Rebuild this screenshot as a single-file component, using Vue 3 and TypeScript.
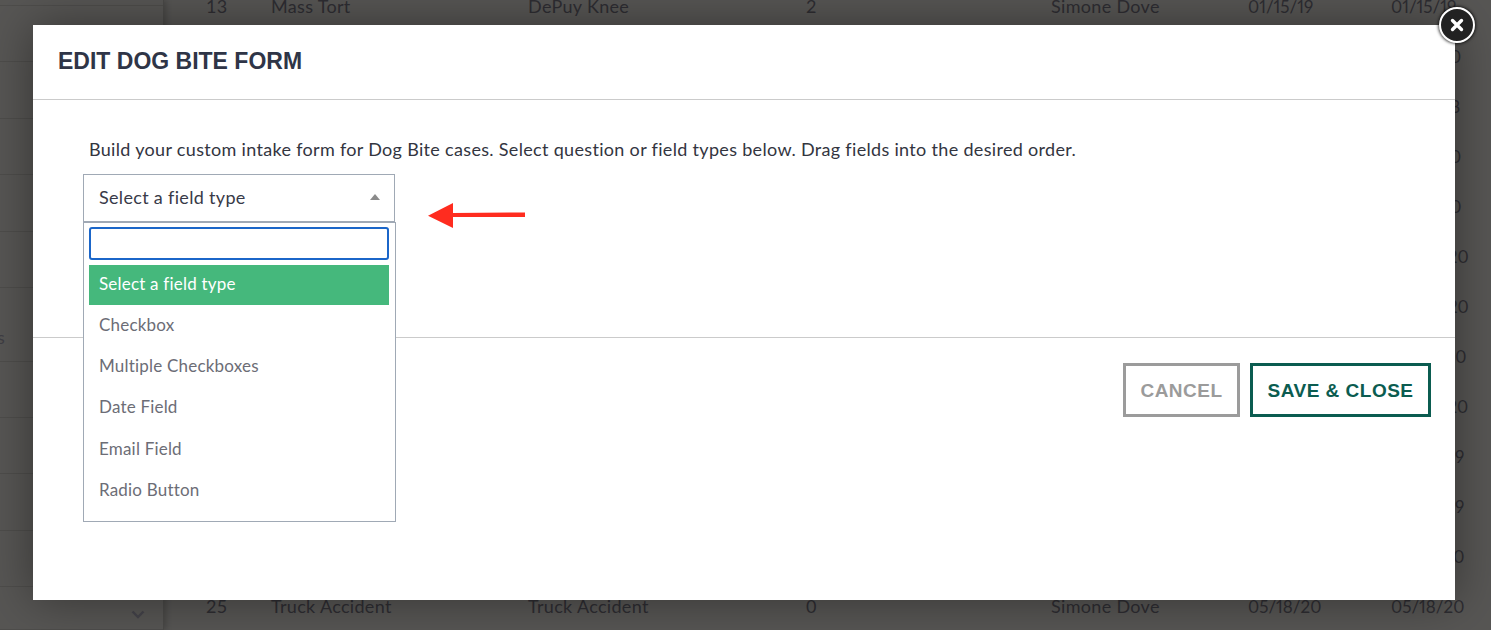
<script setup lang="ts">
interface CaseRow {
  id: number;
  type: string;
  name: string;
  count: number;
  owner: string;
  created: string;
  updated: string;
}

const dates = ['01/15/19', '01/15/20', '05/18/18', '01/15/20', '02/11/20', '03/05/20', '03/20/20', '04/01/20', '04/09/20', '08/02/19', '08/02/19', '05/18/20', '05/18/20'];

const rows: CaseRow[] = dates.map((d, i) => ({
  id: 13 + i,
  type: i === 12 ? 'Truck Accident' : 'Mass Tort',
  name: i === 12 ? 'Truck Accident' : 'DePuy Knee',
  count: i === 12 ? 0 : 2,
  owner: 'Simone Dove',
  created: d,
  updated: d,
}));

const sideHeights = [6, 56, 57, 56, 57, 56, 74, 56, 56, 57, 56, 43];
const options = ['Checkbox', 'Multiple Checkboxes', 'Date Field', 'Email Field', 'Radio Button'];
</script>

<template>
  <div class="page">
    <aside class="sidebar">
      <div
        v-for="(h, i) in sideHeights"
        :key="i"
        class="side-item"
        :style="{ height: h + 'px' }"
      >
        <span v-if="i === 6" class="side-label">Settings</span>
      </div>
      <svg class="side-chevron" width="14" height="9" viewBox="0 0 14 9">
        <path d="M1.5 1.5 7 7l5.5-5.5" fill="none" stroke="#44434a" stroke-width="2.4" />
      </svg>
    </aside>

    <main class="table">
      <div v-for="row in rows" :key="row.id" class="table-row">
        <span>{{ row.id }}</span>
        <span>{{ row.type }}</span>
        <span>{{ row.name }}</span>
        <span>{{ row.count }}</span>
        <span>{{ row.owner }}</span>
        <span class="date">{{ row.created }}</span>
        <span class="date">{{ row.updated }}</span>
      </div>
    </main>

    <section class="modal">
      <header class="modal-header">
        <h2>EDIT DOG BITE FORM</h2>
      </header>

      <div class="modal-body">
        <p>Build your custom intake form for Dog Bite cases. Select question or field types below. Drag fields into the desired order.</p>
        <div class="select">
          <span>Select a field type</span>
          <i class="caret"></i>
        </div>
        <div class="dropdown">
          <input class="search" type="text">
          <div class="option active">Select a field type</div>
          <div v-for="opt in options" :key="opt" class="option">{{ opt }}</div>
        </div>
        <svg class="arrow" width="98" height="26" viewBox="0 0 98 26">
          <path d="M0 12.7 25 0v10l72-.5v4.500L25 14v11z" fill="#ff2c1f" />
        </svg>
      </div>

      <footer class="modal-footer">
        <button class="btn cancel">CANCEL</button>
        <button class="btn save">SAVE &amp; CLOSE</button>
      </footer>

      <button class="close">
        <svg width="14" height="14" viewBox="0 0 14 14">
          <path d="M2.5 2.500l9 9M11.500 2.500l-9 9" stroke="#fff" stroke-width="3.400" stroke-linecap="round" />
        </svg>
      </button>
    </section>
  </div>
</template>

<style scoped>
.page {
  position: relative;
  display: flex;
  width: 1491px;
  height: 630px;
  overflow: hidden;
  background: #575654;
  font-family: Lato, "Liberation Sans", sans-serif;
  font-variant-ligatures: none;
  letter-spacing: 0.32px;
}
.sidebar {
  position: relative;
  flex: 0 0 163px;
  border-right: 1px solid #4a4947;
  box-shadow: 2px 0 6px rgba(0, 0, 0, 0.2);
}
.side-item {
  box-sizing: border-box;
  border-bottom: 1px solid #4e4d4b;
  position: relative;
}
.side-label {
  position: absolute;
  right: calc(100% - 5px);
  top: 38px;
  font-size: 18px;
  color: #3f3e44;
}
.side-chevron {
  position: absolute;
  left: 131px;
  top: 610px;
}
.table {
  flex: 1;
  margin-top: -19px;
}
.table-row {
  display: grid;
  grid-template-columns: 65px 257px 278px 245px 197px 143px 100px;
  align-items: center;
  height: 50px;
  padding-left: 42px;
  font-size: 18px;
  color: #2e2d32;
  white-space: nowrap;
}
.date {
  font-size: 17px;
  font-variant-numeric: proportional-nums;
  letter-spacing: 0;
}
.modal {
  position: absolute;
  left: 33px;
  top: 25px;
  display: flex;
  flex-direction: column;
  width: 1422px;
  height: 575px;
  background: #fff;
  box-shadow: 0 0 45px rgba(0, 0, 0, 0.4);
}
.modal-header {
  display: flex;
  align-items: center;
  box-sizing: border-box;
  height: 75px;
  padding: 0 25px;
  border-bottom: 1px solid #cbcbcb;
}
.modal-header h2 {
  margin: 0 0 1px;
  font-family: "Liberation Sans", Arial, sans-serif;
  font-size: 23px;
  font-weight: 700;
  letter-spacing: 0;
  color: #2f3547;
}
.modal-body {
  position: relative;
  box-sizing: border-box;
  height: 238px;
  padding: 39px 50px 0;
  border-bottom: 1px solid #cbcbcb;
}
.modal-body p {
  margin: 0 0 15px 6px;
  font-size: 18px;
  line-height: 20px;
  color: #33353f;
}
.select {
  display: flex;
  align-items: center;
  justify-content: space-between;
  box-sizing: border-box;
  width: 312px;
  height: 48px;
  padding: 0 14px 2px 15px;
  border: 1px solid #a0a9b5;
  font-size: 18px;
  color: #383a48;
}
.caret {
  width: 0;
  height: 0;
  border-left: 5px solid transparent;
  border-right: 5px solid transparent;
  border-bottom: 6px solid #8b8b8b;
}
.dropdown {
  position: absolute;
  z-index: 2;
  left: 50px;
  top: 122px;
  display: flex;
  flex-direction: column;
  box-sizing: border-box;
  width: 313px;
  height: 300px;
  padding: 4px 6px 5px 5px;
  border: 1px solid #a0a9b5;
  background: #fff;
}
.search {
  box-sizing: border-box;
  width: 100%;
  height: 33px;
  margin: 0 0 5px;
  border: 2px solid #1b66c9;
  border-radius: 3px;
  outline: none;
}
.option {
  box-sizing: border-box;
  height: 41.2px;
  padding: 0 10px;
  font-size: 17px;
  line-height: 39px;
  letter-spacing: 0.2px;
  color: #6c6d76;
}
.option.active {
  height: 40px;
  line-height: 37px;
  background: #45b87c;
  color: #fff;
}
.arrow {
  position: absolute;
  left: 395px;
  top: 103px;
}
.modal-footer {
  display: flex;
  justify-content: flex-end;
  gap: 10px;
  padding: 25px 24px 0 0;
}
.btn {
  box-sizing: border-box;
  height: 54px;
  padding: 1px 0 0;
  border: 3px solid;
  background: #fff;
  font-family: "Liberation Sans", Arial, sans-serif;
  font-size: 19px;
  font-weight: 700;
  letter-spacing: 0.5px;
}
.cancel {
  width: 117px;
  border-color: #9b9b9b;
  color: #9b9b9b;
}
.save {
  width: 181px;
  border-color: #0b5c50;
  color: #0b5c50;
}
.close {
  position: absolute;
  left: 1406px;
  top: -18px;
  display: flex;
  align-items: center;
  justify-content: center;
  box-sizing: border-box;
  width: 36px;
  height: 36px;
  padding: 0;
  border: 2px solid #fff;
  border-radius: 50%;
  background: #222;
  box-shadow: 0 0 3px 1px rgba(0, 0, 0, 0.7);
}
</style>
